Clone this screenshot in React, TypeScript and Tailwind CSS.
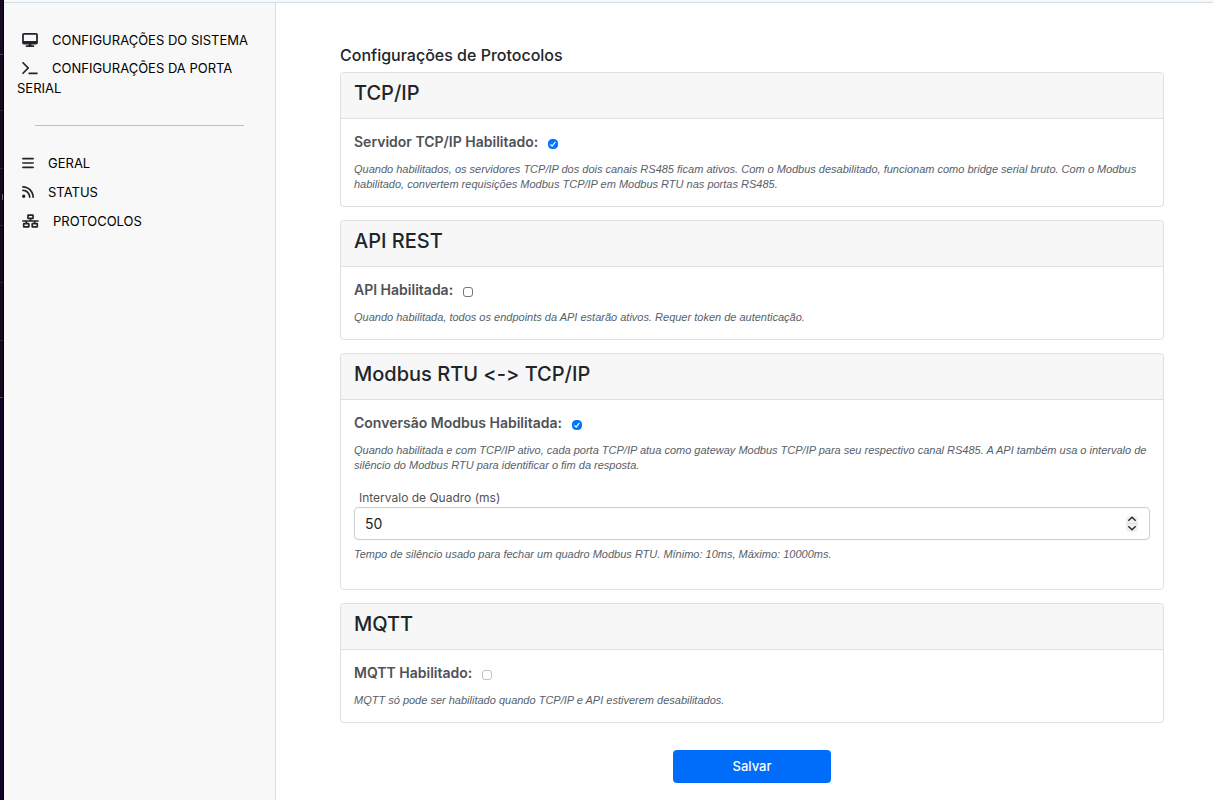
import { useState } from "react";
import type { ReactNode } from "react";
import { FaBars, FaDesktop, FaNetworkWired, FaRss, FaTerminal } from "react-icons/fa6";

function DesktopEdge() {
  return (
    <div aria-hidden="true" className="flex w-1 shrink-0 flex-col border-r border-black bg-[#0f0425]">
      <div className="h-[55px] border-b border-[#4b4056] bg-[#160a26]" />
      <div className="h-14 border-b border-[#2c2333] bg-[#140a1c]" />
      <div className="h-[58px] border-b border-[#2c2333] bg-[#140a1c]" />
      <div className="flex h-[57px] items-center justify-end border-b border-[#2c2333] bg-[#140a1c]">
        <span className="h-1.5 w-px bg-[#6b6572]" />
      </div>
      <div className="h-[57px] border-b border-[#2c2333] bg-[#140a1c]" />
      <div className="h-[58px] border-b border-[#2c2333] bg-[#140a1c]" />
      <div className="h-[57px] border-b border-[#4b4056] bg-[#140a1c]" />
    </div>
  );
}

function NavLink({ icon, children }: { icon: ReactNode; children: ReactNode }) {
  return (
    <li>
      <a href="#" className="block text-black">
        <span className="mr-3.5 ml-[5px] inline-block align-[-2px] text-[#212529]">{icon}</span>
        {children}
      </a>
    </li>
  );
}

function Card({ title, children }: { title: string; children: ReactNode }) {
  return (
    <section className="rounded border border-[#dfdfdf] bg-white">
      <h2 className="rounded-t border-b border-[#dfdfdf] bg-[#f7f7f7] px-[13px] pt-2 pb-3 text-xl/[25px] font-medium text-[#212529] [font-variant-ligatures:no-contextual]">
        {title}
      </h2>
      <div className="px-[13px] pt-3 pb-3.5">{children}</div>
    </section>
  );
}

interface ToggleProps {
  id: string;
  label: string;
  initial?: boolean;
  disabled?: boolean;
}

function Toggle({ id, label, initial = false, disabled = false }: ToggleProps) {
  const [checked, setChecked] = useState(initial);
  return (
    <div className="mb-[9px] flex items-center gap-2.5">
      <label htmlFor={id} className="text-sm/[22px] font-semibold text-[#4f5255]">
        {label}
      </label>
      <span className="mt-1 grid place-items-center">
        <input
          id={id}
          type="checkbox"
          checked={checked}
          disabled={disabled}
          onChange={(e) => setChecked(e.target.checked)}
          className="col-start-1 row-start-1 size-2.5 appearance-none rounded-[3px] border border-[#767676] bg-white checked:rounded checked:border-[#0075ff] checked:bg-[#0075ff] disabled:border-[#c3c3c3]"
        />
        {checked && (
          <svg viewBox="0 0 10 10" className="pointer-events-none z-10 col-start-1 row-start-1 size-2.5" fill="none" stroke="#fff" strokeWidth="1.2">
            <path d="M2.4 5.3 4.2 7.1 7.4 2.9" />
          </svg>
        )}
      </span>
    </div>
  );
}

function Hint({ id, children }: { id?: string; children: ReactNode }) {
  return (
    <p id={id} className="font-['Liberation_Sans',sans-serif] text-[11px]/[15px] text-[#56616a] italic">
      {children}
    </p>
  );
}

function FrameInterval() {
  const [value, setValue] = useState(50);
  const step = (d: number) => setValue((v) => Math.min(10000, Math.max(10, v + d)));
  return (
    <div className="mt-4 mb-[13px]">
      <label htmlFor="frame-interval" className="block pl-[5px] text-xs/[18px] text-[#4f5255]">
        Intervalo de Quadro (ms)
      </label>
      <div className="mb-[7px] flex h-[33px] items-center rounded border border-[#c9ced4] bg-white pr-[11px]">
        <input
          id="frame-interval"
          type="number"
          min={10}
          max={10000}
          value={value}
          aria-describedby="frame-hint"
          onChange={(e) => setValue(Number(e.target.value))}
          className="min-w-0 flex-1 appearance-none bg-transparent px-2.5 text-sm text-[#212529] outline-none [-moz-appearance:textfield] [&::-webkit-inner-spin-button]:appearance-none"
        />
        <div className="flex h-4 w-3 flex-col divide-y divide-[#dcdcdc] rounded bg-[#f0f0f0]">
          <button type="button" aria-label="Aumentar" onClick={() => step(1)} className="flex flex-1 items-center justify-center">
            <svg viewBox="0 0 10 6" className="h-1.5 w-2.5" fill="none" stroke="#2b2b2b" strokeWidth="1.4">
              <path d="M1.3 4.8 5 1.2l3.7 3.6" />
            </svg>
          </button>
          <button type="button" aria-label="Diminuir" onClick={() => step(-1)} className="flex flex-1 items-center justify-center">
            <svg viewBox="0 0 10 6" className="h-1.5 w-2.5" fill="none" stroke="#2b2b2b" strokeWidth="1.4">
              <path d="M1.3 1.2 5 4.8l3.7-3.6" />
            </svg>
          </button>
        </div>
      </div>
      <Hint id="frame-hint">Tempo de silêncio usado para fechar um quadro Modbus RTU. Mínimo: 10ms, Máximo: 10000ms.</Hint>
    </div>
  );
}

export default function App() {
  return (
    <div className="flex min-h-screen bg-white font-['Inter',sans-serif]">
      <DesktopEdge />
      <div className="flex min-w-0 flex-1 flex-col">
        <div className="h-[3px] border-b border-[#d3dde6] bg-[#f8f8f8]" />
        <div className="flex flex-1">
          <aside className="w-[272px] shrink-0 border-r border-[#dcdcdc] bg-[#f8f8f8] px-[13px] pt-[27px]">
            <nav aria-label="Principal" className="text-[13px]/5">
              <ul className="flex flex-col gap-2">
                <NavLink icon={<FaDesktop className="h-3.5 w-4" />}>CONFIGURAÇÕES DO SISTEMA</NavLink>
                <NavLink icon={<FaTerminal className="h-3.5 w-4" />}>CONFIGURAÇÕES DA PORTA SERIAL</NavLink>
              </ul>
              <hr className="mt-[27px] mr-[18px] mb-[27px] ml-[18px] border-[#c0c0c0]" />
              <ul className="flex flex-col gap-[9px]">
                <NavLink icon={<FaBars className="h-3.5 w-3" />}>GERAL</NavLink>
                <NavLink icon={<FaRss className="h-3.5 w-3" />}>STATUS</NavLink>
                <NavLink icon={<FaNetworkWired className="h-3.5 w-[17px]" />}>PROTOCOLOS</NavLink>
              </ul>
            </nav>
          </aside>
          <main className="min-w-0 flex-1 pt-10 pr-[49px] pb-4 pl-16">
            <form onSubmit={(e) => e.preventDefault()}>
              <h1 className="mb-[5px] text-base/6 font-medium text-[#212529]">Configurações de Protocolos</h1>
              <div className="flex flex-col gap-[13px]">
                <Card title="TCP/IP">
                  <Toggle id="tcp" label="Servidor TCP/IP Habilitado:" initial />
                  <Hint>
                    Quando habilitados, os servidores TCP/IP dos dois canais RS485 ficam ativos. Com o Modbus desabilitado, funcionam como bridge serial bruto. Com o Modbus habilitado, convertem requisições Modbus TCP/IP em Modbus RTU nas portas RS485.
                  </Hint>
                </Card>
                <Card title="API REST">
                  <Toggle id="api" label="API Habilitada:" />
                  <Hint>Quando habilitada, todos os endpoints da API estarão ativos. Requer token de autenticação.</Hint>
                </Card>
                <Card title="Modbus RTU <-> TCP/IP">
                  <Toggle id="modbus" label="Conversão Modbus Habilitada:" initial />
                  <Hint>
                    Quando habilitada e com TCP/IP ativo, cada porta TCP/IP atua como gateway Modbus TCP/IP para seu respectivo canal RS485. A API também usa o intervalo de silêncio do Modbus RTU para identificar o fim da resposta.
                  </Hint>
                  <FrameInterval />
                </Card>
                <Card title="MQTT">
                  <Toggle id="mqtt" label="MQTT Habilitado:" disabled />
                  <Hint>MQTT só pode ser habilitado quando TCP/IP e API estiverem desabilitados.</Hint>
                </Card>
              </div>
              <button type="submit" className="mx-auto mt-[27px] block h-[33px] w-[158px] rounded bg-[#006dfa] text-[13px] font-medium text-white">
                Salvar
              </button>
            </form>
          </main>
        </div>
      </div>
    </div>
  );
}
